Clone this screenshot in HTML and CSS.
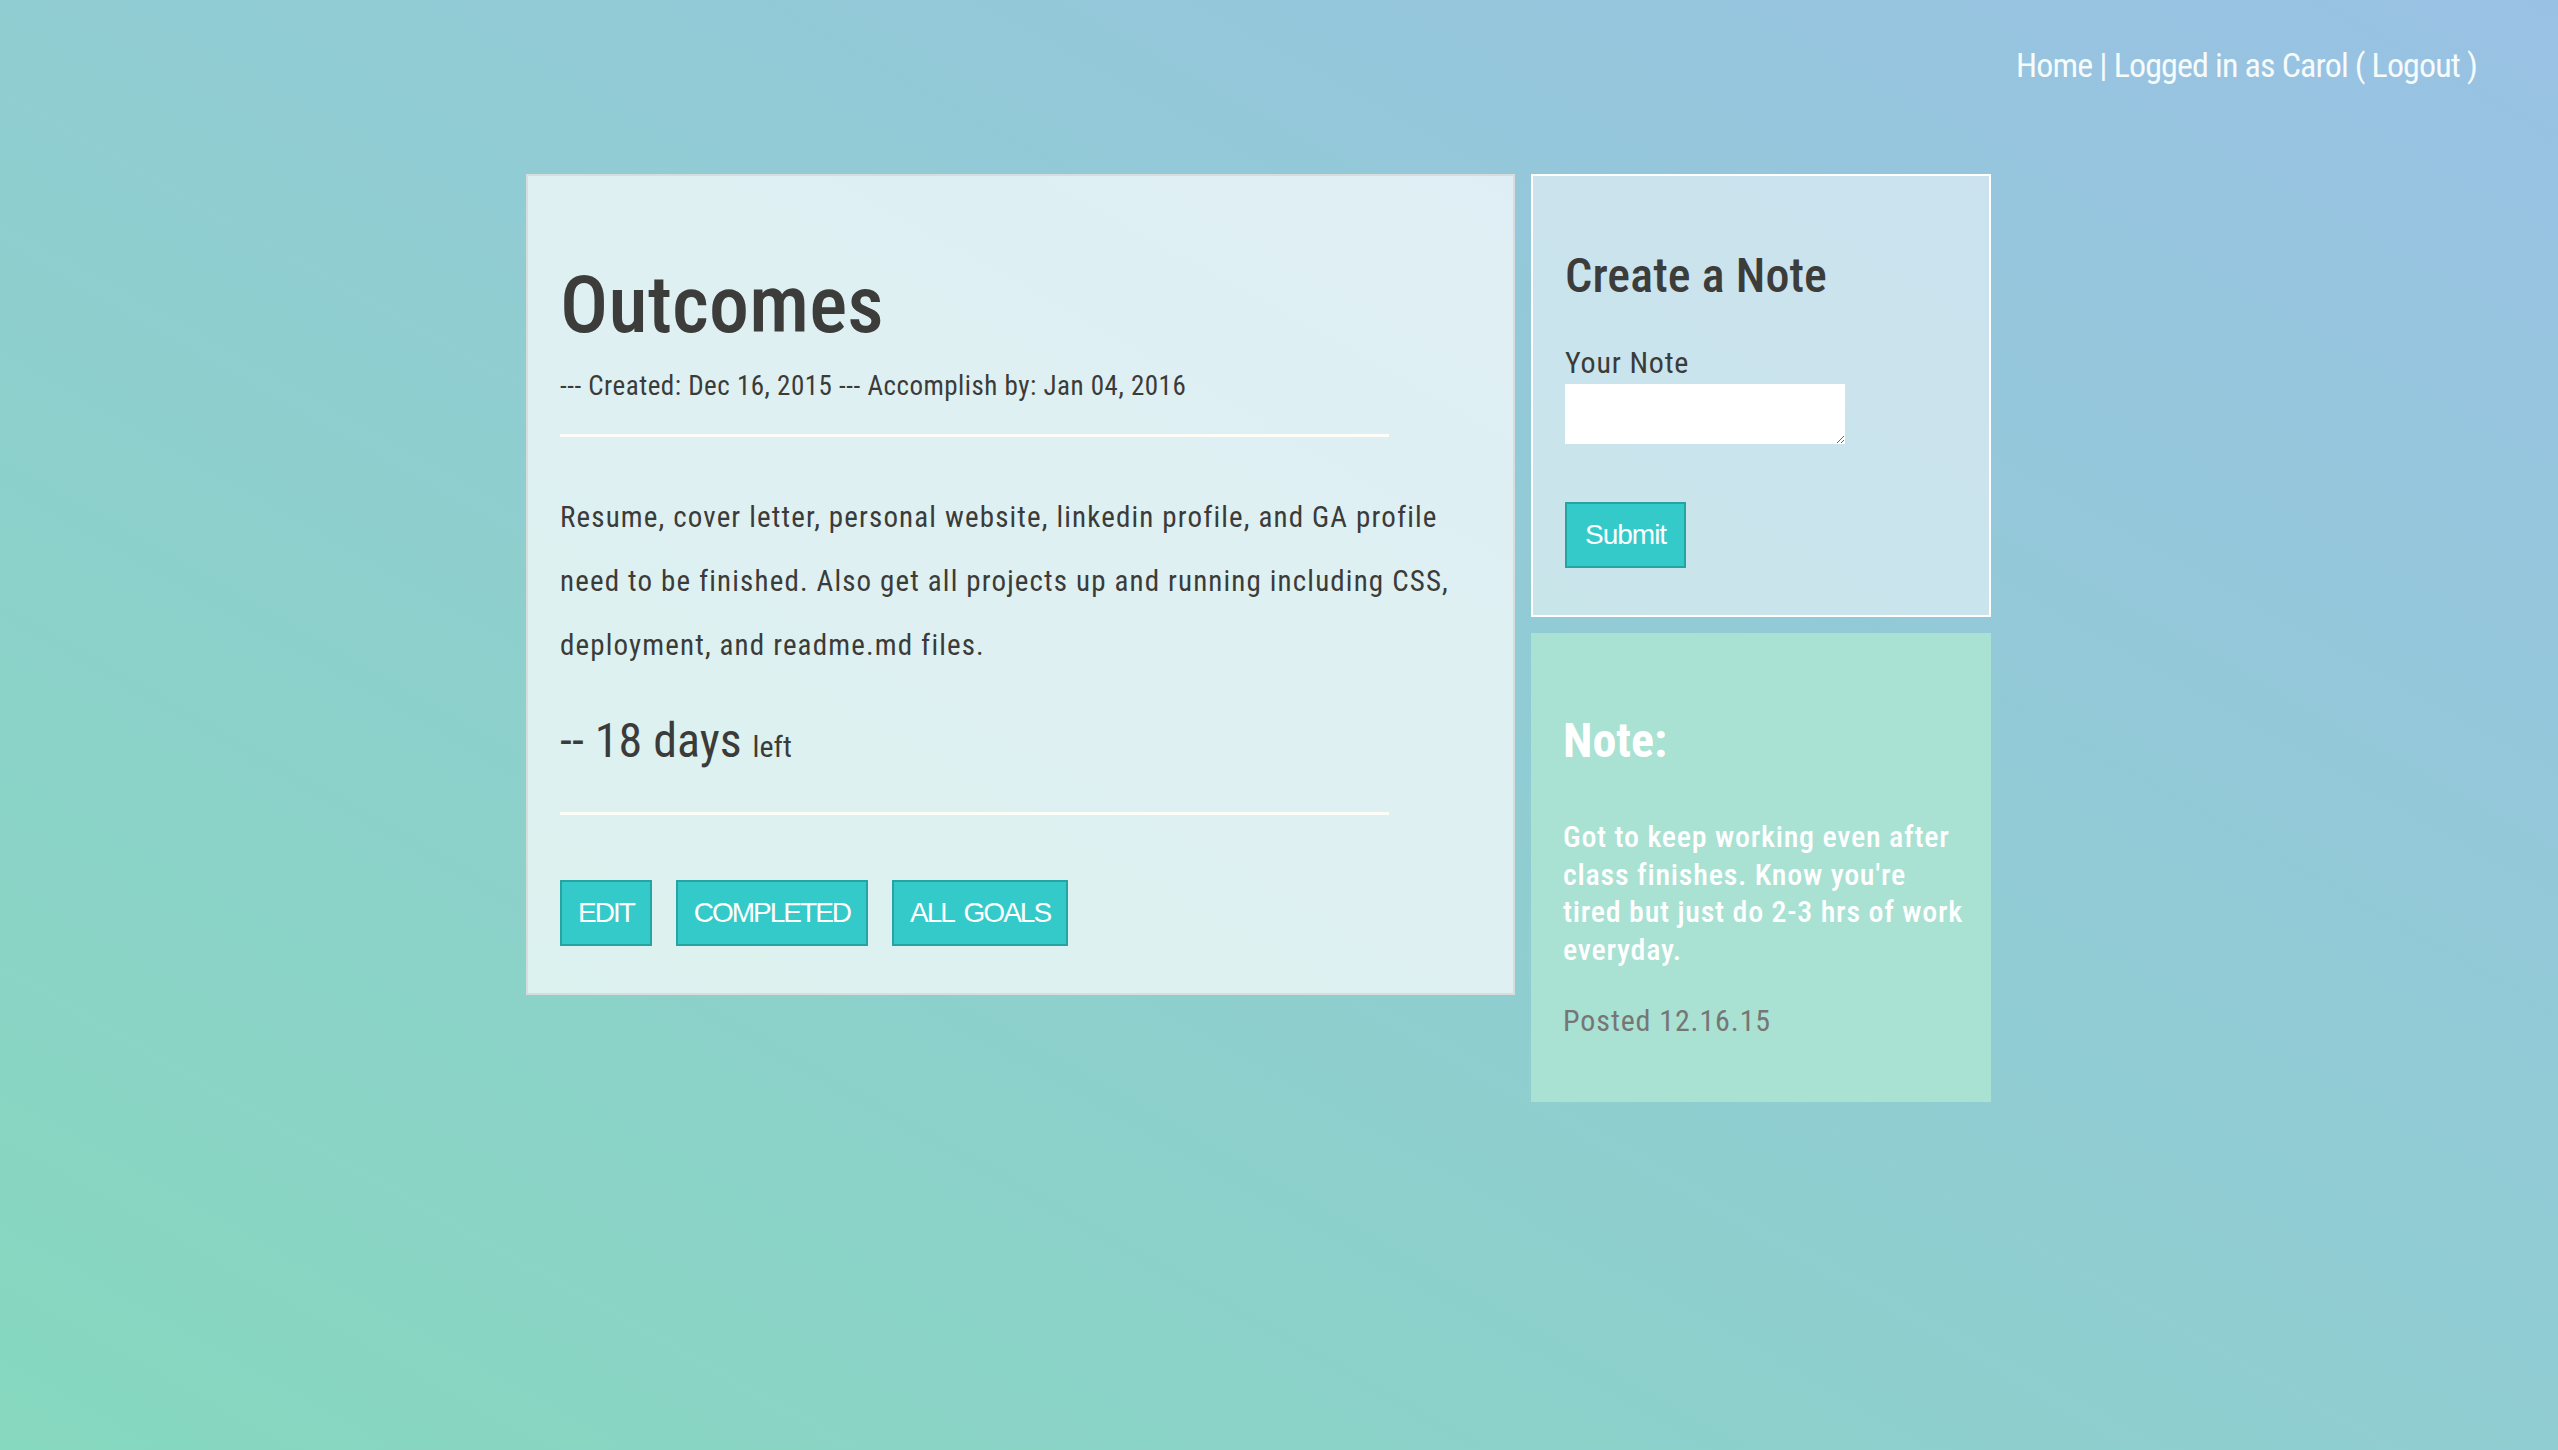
FILE: index.html
```html
<!DOCTYPE html>
<html lang="en">
<head>
<meta charset="utf-8">
<title>Outcomes</title>
<link rel="stylesheet" href="styles.css">
</head>
<body>
<header class="topbar">
  <nav class="topnav"><a href="#" class="topnav-link">Home</a> | Logged in as Carol ( <a href="#" class="topnav-link">Logout</a> )</nav>
</header>
<main class="layout">
  <section class="goal-card">
    <h1 class="goal-title">Outcomes</h1>
    <p class="goal-dates">--- Created: Dec 16, 2015 --- Accomplish by: Jan 04, 2016</p>
    <hr class="goal-rule">
    <p class="goal-desc">Resume, cover letter, personal website, linkedin profile, and GA profile need to be finished. Also get all projects up and running including CSS, deployment, and readme.md files.</p>
    <p class="goal-days">-- 18 days <span class="goal-left">left</span></p>
    <hr class="goal-rule goal-rule-bottom">
    <div class="goal-actions">
      <a href="#" class="btn">EDIT</a>
      <a href="#" class="btn">COMPLETED</a>
      <a href="#" class="btn">ALL GOALS</a>
    </div>
  </section>
  <aside class="side">
    <section class="note-form">
      <h2 class="note-form-title">Create a Note</h2>
      <label class="note-label" for="note">Your Note</label>
      <textarea id="note" class="note-input"></textarea>
      <button type="button" class="btn btn-submit">Submit</button>
    </section>
    <section class="note-card">
      <h3 class="note-title">Note:</h3>
      <p class="note-body">Got to keep working even after class finishes. Know you're tired but just do 2-3 hrs of work everyday.</p>
      <p class="note-date">Posted 12.16.15</p>
    </section>
  </aside>
</main>
</body>
</html>
```
FILE: styles.css
```css
* { box-sizing: border-box; }
html, body { margin: 0; padding: 0; }
body {
  min-height: 100vh;
  font-family: "Roboto Condensed", Roboto, "Liberation Sans", sans-serif;
  color: #3b3b39;
  background: linear-gradient(to top right, #86d8be 0%, #90cdd2 50%, #99c1e4 100%);
}
.topbar {
  display: flex;
  justify-content: flex-end;
  padding: 43px 81px 0 0;
}
.topnav {
  font-size: 34px;
  line-height: 44px;
  letter-spacing: -0.85px;
  color: #f6fbfb;
}
.topnav-link { color: #f6fbfb; text-decoration: none; }

.layout {
  width: 1506px;
  margin: 87px auto 0;
  display: grid;
  grid-template-columns: 989px 460px;
  column-gap: 16px;
  align-items: start;
}

.goal-card {
  border: 2px solid #d7dddd;
  background: rgba(255, 255, 255, 0.7);
  padding: 32px;
}
.goal-title {
  margin: 53px 0 0;
  font-size: 80px;
  line-height: 88px;
  font-weight: 500;
  letter-spacing: 0.2px;
  color: #3c3c3a;
}
.goal-dates {
  margin: 22px 0 0;
  font-size: 27px;
  line-height: 30px;
  letter-spacing: 0.5px;
}
.goal-rule {
  width: 90%;
  height: 3px;
  margin: 33px 0 0;
  border: 0;
  background: #fdfdf8;
}
.goal-desc {
  margin: 48px 0 0;
  font-size: 29px;
  line-height: 64px;
  letter-spacing: 1.15px;
}
.goal-days {
  margin: 34px 0 0;
  font-size: 48px;
  line-height: 60px;
}
.goal-left { font-size: 30px; line-height: 1; }
.goal-rule-bottom { margin-top: 41px; }
.goal-actions {
  display: flex;
  gap: 24px;
  margin: 65px 0 15px;
}
.btn {
  display: inline-block;
  height: 66px;
  padding: 0 16px;
  border: 2px solid #26a3a3;
  background: #35caca;
  color: #ffffff;
  font-family: "Liberation Sans", Arial, sans-serif;
  font-size: 28px;
  line-height: 62px;
  letter-spacing: -2px;
  word-spacing: 5px;
  text-decoration: none;
}

.side {
  display: flex;
  flex-direction: column;
  gap: 16px;
}
.note-form {
  border: 2px solid #ffffff;
  background: rgba(255, 255, 255, 0.5);
  padding: 32px;
}
.note-form-title {
  margin: 40px 0 0;
  font-size: 48px;
  line-height: 56px;
  font-weight: 500;
  letter-spacing: 0.1px;
  color: #3c3c3a;
}
.note-label {
  display: block;
  margin-top: 42px;
  font-size: 30px;
  line-height: 34px;
  letter-spacing: 0.8px;
}
.note-input {
  display: block;
  width: 280px;
  height: 60px;
  margin-top: 4px;
  border: 0;
  background: #ffffff;
}
.btn-submit {
  display: block;
  margin: 58px 0 15px;
  padding: 0 18px;
  letter-spacing: -1px;
  cursor: pointer;
}

.note-card {
  background: #a9e2d3;
  padding: 32px 28px 32px 32px;
  color: #ffffff;
}
.note-title {
  margin: 48px 0 0;
  font-size: 48px;
  line-height: 56px;
  font-weight: 700;
}
.note-body {
  margin: 49px 0 0;
  font-size: 30px;
  line-height: 37.5px;
  font-weight: 500;
  letter-spacing: 0.75px;
}
.note-date {
  margin: 34px 0 30px;
  font-size: 30px;
  line-height: 37.5px;
  letter-spacing: 0.9px;
  color: #767676;
}
```
